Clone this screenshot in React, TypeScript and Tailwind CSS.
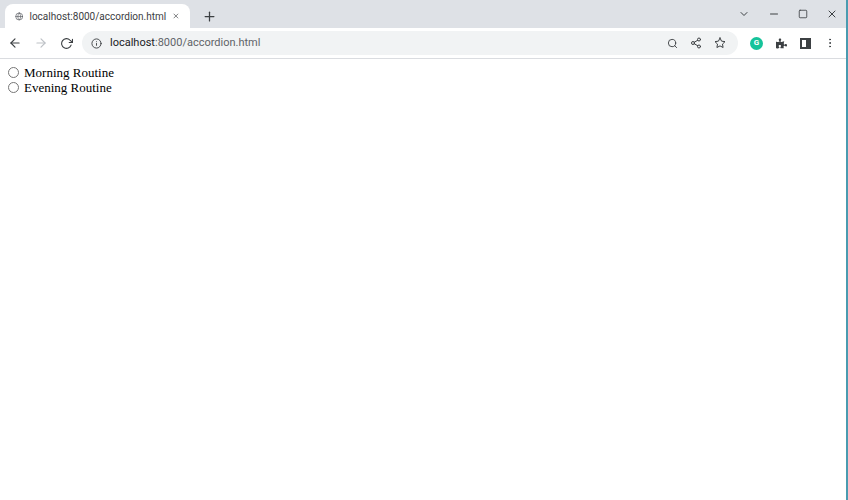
import { FiArrowLeft, FiArrowRight, FiRotateCw, FiInfo, FiSearch, FiShare2, FiStar, FiChevronDown, FiMinus, FiSquare, FiX, FiPlus, FiMoreVertical, FiGlobe } from 'react-icons/fi'
import { FaPuzzlePiece } from 'react-icons/fa'

export default function App() {
  return (
    <div className="w-[848px] h-[500px] bg-white flex flex-col overflow-hidden border-r-2 border-[#4a9bb0]" style={{ fontFamily: 'Roboto, "Liberation Sans", sans-serif' }}>
      {/* tab strip */}
      <div className="h-[28px] bg-[#dee1e6] flex items-end pl-[5px] shrink-0">
        <div className="w-[185px] h-[24px] bg-white rounded-t-lg flex items-center px-[10px] gap-[6px] text-[#3c4043]">
          <FiGlobe className="text-[13px] text-[#5f6368]" />
          <span className="text-[10px] flex-1">localhost:8000/accordion.html</span>
          <FiX className="text-[12px]" />
        </div>
        <div className="h-[24px] flex items-center pl-[12px] text-[#3c4043]">
          <FiPlus className="text-[15px]" />
        </div>
        <div className="flex-1" />
        <div className="h-[28px] flex items-center gap-[18px] pr-[8px] text-[#3c4043] text-[12px]">
          <FiChevronDown />
          <FiMinus />
          <FiSquare className="text-[10px]" />
          <FiX />
        </div>
      </div>
      {/* toolbar */}
      <div className="h-[31px] flex items-center border-b border-[#dadce0] shrink-0 text-[#5f6368]">
        <div className="flex items-center gap-[12px] pl-[8px] w-[82px]">
          <FiArrowLeft className="text-[14px] text-[#3c4043]" />
          <FiArrowRight className="text-[14px] text-[#bdc1c6]" />
          <FiRotateCw className="text-[13px] text-[#3c4043]" />
        </div>
        <div className="w-[656px] h-[24px] bg-[#f1f3f4] rounded-full flex items-center px-[9px] gap-[8px]">
          <FiInfo className="text-[11px] text-[#3c4043]" />
          <span className="text-[11px] flex-1 text-[#5f6368]"><span className="text-[#202124]">localhost</span>:8000/accordion.html</span>
          <div className="flex items-center gap-[12px] text-[12px] text-[#3c4043] pr-[3px]">
            <FiSearch className="text-[11px]" />
            <FiShare2 />
            <FiStar />
          </div>
        </div>
        <div className="flex items-center gap-[13px] pl-[12px] text-[#3c4043]">
          <div className="w-[13px] h-[13px] rounded-full bg-[#15c39a] flex items-center justify-center text-white text-[8px] font-bold">G</div>
          <FaPuzzlePiece className="text-[11px]" />
          <div className="w-[11px] h-[11px] border-2 border-[#3c4043] border-r-[5px]" />
          <FiMoreVertical className="text-[12px]" />
        </div>
      </div>
      {/* page */}
      <div className="pt-[6px] pl-[8px] text-[13px] text-black leading-[15px]" style={{ fontFamily: '"Liberation Serif", serif' }}>
        {['Morning Routine', 'Evening Routine'].map(t => (
          <label key={t} className="flex items-center gap-[5px]">
            <input type="radio" name="r" className="w-[11px] h-[11px] m-0" />
            {t}
          </label>
        ))}
      </div>
    </div>
  )
}
